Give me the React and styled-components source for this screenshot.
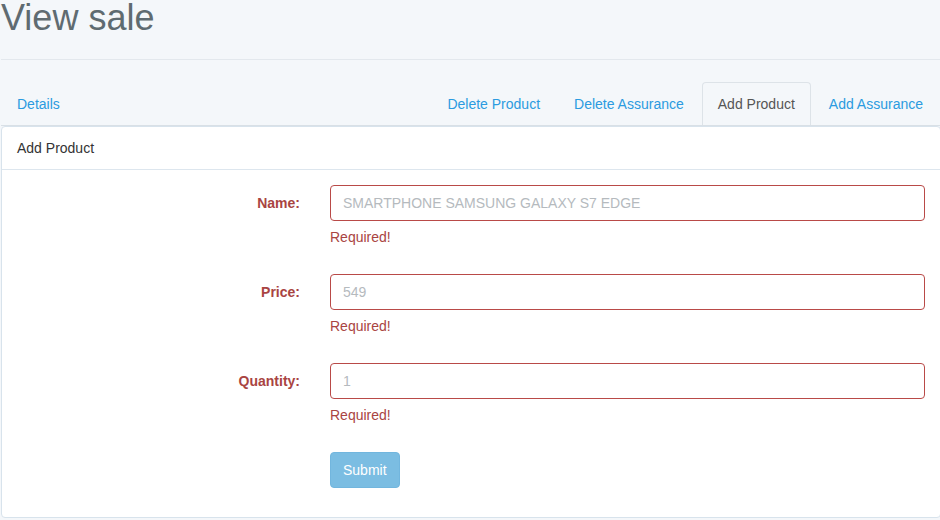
import React from "react";
import styled, { createGlobalStyle } from "styled-components";

const Global = createGlobalStyle`
  html, body { margin: 0; padding: 0; }
  body {
    background: #f4f7fa;
    font-family: "Liberation Sans", Arial, sans-serif;
    font-size: 14px;
    color: #333;
    overflow: hidden;
    width: 940px;
    height: 520px;
  }
  * { box-sizing: border-box; }
`;

const Page = styled.div`
  width: 941px;
  padding-left: 1px;
`;

const Title = styled.h1`
  margin: 0;
  font-size: 36px;
  line-height: 36px;
  font-weight: 400;
  color: #5f6b71;
`;

const Rule = styled.hr`
  margin: 23px 0 22px;
  border: 0;
  border-top: 1px solid #e3e8ed;
  height: 0;
`;

const Tabs = styled.ul`
  list-style: none;
  margin: 0;
  padding: 0;
  display: flex;
  border-bottom: 1px solid #d9e0e6;
`;

const Tab = styled.li`
  margin-right: 2px;
  ${(p) => p.$pushRight && "margin-left: auto;"}
`;

const TabLink = styled.a`
  display: block;
  padding: 11px 15px;
  line-height: 20px;
  border: 1px solid ${(p) => (p.$active ? "#dde3e8" : "transparent")};
  border-bottom: 0;
  border-radius: 4px 4px 0 0;
  color: ${(p) => (p.$active ? "#555" : "#2b9be0")};
  background: ${(p) => (p.$active ? "#f4f7fa" : "transparent")};
  text-decoration: none;
  cursor: pointer;
`;

const Panel = styled.div`
  background: #fff;
  border: 1px solid #d8e3ec;
  border-radius: 4px;
`;

const PanelHeading = styled.div`
  padding: 11px 15px;
  line-height: 20px;
  color: #333;
  border-bottom: 1px solid #dde6ee;
`;

const PanelBody = styled.form`
  padding: 15px 15px 29px;
  display: flex;
  flex-direction: column;
  gap: 27px;
`;

const FormRow = styled.div`
  display: grid;
  grid-template-columns: 283px 1fr;
  column-gap: 30px;
  align-items: center;
`;

const Label = styled.label`
  text-align: right;
  font-weight: 700;
  color: #a94442;
  line-height: 20px;
`;

const Input = styled.input`
  height: 36px;
  width: 100%;
  padding: 0 12px;
  font: inherit;
  font-size: 14px;
  color: #555;
  background: #fff;
  border: 1px solid #b94a48;
  border-radius: 4px;
  outline: none;
  &::placeholder { color: #b5babe; }
`;

const Help = styled.div`
  grid-column: 2;
  margin-top: 6px;
  line-height: 20px;
  color: #a94442;
`;

const Submit = styled.button`
  grid-column: 2;
  justify-self: start;
  height: 36px;
  padding: 0 12px;
  font: inherit;
  font-size: 14px;
  color: #fff;
  background: #7bbde2;
  border: 1px solid #72b6de;
  border-radius: 4px;
  cursor: not-allowed;
`;

const fields = [
  { label: "Name:", placeholder: "SMARTPHONE SAMSUNG GALAXY S7 EDGE" },
  { label: "Price:", placeholder: "549" },
  { label: "Quantity:", placeholder: "1" },
];

export default function App() {
  return (
    <>
      <Global />
      <Page>
        <Title>View sale</Title>
        <Rule />
        <Tabs>
          <Tab><TabLink>Details</TabLink></Tab>
          <Tab $pushRight><TabLink>Delete Product</TabLink></Tab>
          <Tab><TabLink>Delete Assurance</TabLink></Tab>
          <Tab><TabLink $active>Add Product</TabLink></Tab>
          <Tab><TabLink>Add Assurance</TabLink></Tab>
        </Tabs>
        <Panel>
          <PanelHeading>Add Product</PanelHeading>
          <PanelBody onSubmit={(e) => e.preventDefault()}>
            {fields.map((f) => (
              <FormRow key={f.label}>
                <Label>{f.label}</Label>
                <Input placeholder={f.placeholder} />
                <Help>Required!</Help>
              </FormRow>
            ))}
            <FormRow>
              <Submit type="submit" disabled>Submit</Submit>
            </FormRow>
          </PanelBody>
        </Panel>
      </Page>
    </>
  );
}
